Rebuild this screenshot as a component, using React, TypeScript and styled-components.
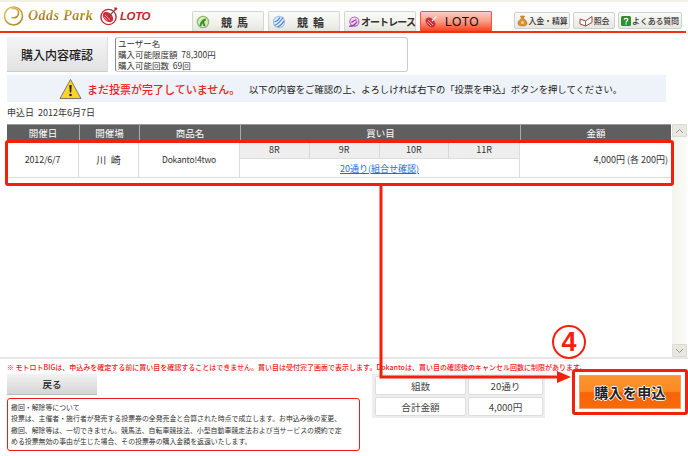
import React from "react";
import styled, { createGlobalStyle } from "styled-components";

const GlobalStyle = createGlobalStyle`
  html, body {
    margin: 0;
    padding: 0;
    background: #fff;
  }
  body {
    font-family: "Noto Sans CJK JP", "Liberation Sans", sans-serif;
    font-size: 9px;
    color: #222;
  }
`;

const Page = styled.div`
  position: relative;
  width: 688px;
  height: 456px;
  overflow: hidden;
  border-top: 2px solid #f3f1e4;
  box-sizing: border-box;
`;

const Header = styled.div`
  display: flex;
  align-items: flex-end;
  width: 686px;
  height: 31px;
  box-sizing: border-box;
  border-bottom: 2px solid #f03010;
  padding-left: 3px;
`;

const Logo = styled.div`
  display: flex;
  align-items: center;
  width: 189px;
  height: 29px;
  flex-shrink: 0;
  padding-bottom: 2px;
  box-sizing: border-box;
`;

const OddsText = styled.span`
  font-family: "Liberation Serif", serif;
  font-style: italic;
  font-weight: bold;
  font-size: 14px;
  letter-spacing: 0.45px;
  background: linear-gradient(#d8b850, #a88420 60%, #8a6a18);
  -webkit-background-clip: text;
  background-clip: text;
  color: transparent;
  margin-left: 4px;
  width: 72px;
  white-space: nowrap;
`;

const LotoText = styled.span`
  font-family: "Liberation Sans", sans-serif;
  font-style: italic;
  font-weight: bold;
  font-size: 11.5px;
  letter-spacing: -0.4px;
  color: #c8262c;
  margin-left: 1px;
`;

const Tabs = styled.div`
  display: flex;
  gap: 4px;
`;

const Tab = styled.div<{ $active?: boolean }>`
  display: flex;
  align-items: center;
  width: 72px;
  height: 20px;
  box-sizing: border-box;
  padding-left: 3px;
  gap: 1px;
  border: 1px solid ${({ $active }) => ($active ? "#f4552e" : "#d6d6d0")};
  border-bottom: none;
  border-radius: 2px 2px 0 0;
  background: ${({ $active }) =>
    $active
      ? "linear-gradient(#fbd0c4, #fa9a84 50%, #f6431e)"
      : "linear-gradient(#fafaf8, #f0f0ec 60%, #e4e4e0)"};
  color: #333;
`;

const TabLabel = styled.span<{ $wide?: boolean; $latin?: boolean }>`
  flex: 1;
  text-align: center;
  white-space: nowrap;
  letter-spacing: ${({ $wide, $latin }) =>
    $wide ? "5px" : $latin ? "0.4px" : "-0.9px"};
  font-family: ${({ $latin }) =>
    $latin ? '"Liberation Sans", sans-serif' : "inherit"};
  font-weight: ${({ $latin }) => ($latin ? "normal" : "bold")};
  font-size: ${({ $latin, $wide }) =>
    $latin ? "12px" : $wide ? "11px" : "10px"};
  color: ${({ $latin }) => ($latin ? "#111" : "#333")};
  padding-right: ${({ $latin }) => ($latin ? "6px" : "0")};
`;

const Utilities = styled.div`
  display: flex;
  gap: 3px;
  margin-left: 22px;
  margin-bottom: 2px;
`;

const UtilityButton = styled.div<{ $width: number }>`
  display: flex;
  align-items: center;
  justify-content: center;
  gap: 1px;
  width: ${({ $width }) => $width}px;
  height: 17px;
  box-sizing: border-box;
  border: 1px solid #d0d0cc;
  border-radius: 2px;
  background: linear-gradient(#fafaf8, #e6e6e2);
  font-size: 8px;
  font-weight: 500;
  color: #333;
  white-space: nowrap;
  letter-spacing: -0.2px;
`;

const TitleRow = styled.div`
  display: flex;
  gap: 7px;
  padding: 4px 0 0 7px;
`;

const TitleBox = styled.div`
  display: flex;
  align-items: center;
  justify-content: center;
  width: 101px;
  height: 35px;
  background: linear-gradient(#f4f4f4, #e2e2e2);
  border-right: 1px solid #ddd;
  border-bottom: 1px solid #ccc;
  box-sizing: border-box;
  font-size: 12px;
  font-weight: 500;
  color: #222;
`;

const UserBox = styled.div`
  width: 293px;
  height: 35px;
  box-sizing: border-box;
  padding: 0 2px;
  border: 1px solid #ccc;
  border-radius: 3px;
  border-left-color: #888;
  line-height: 11px;
  font-size: 8.5px;
  color: #333;
`;

const Banner = styled.div`
  display: flex;
  align-items: center;
  width: 659px;
  height: 27px;
  margin: 3px 0 0 7px;
  padding-left: 52px;
  box-sizing: border-box;
  background: #eef2f9;
`;

const BannerAlert = styled.span`
  margin-left: 5px;
  width: 162px;
  font-size: 11px;
  font-weight: 500;
  color: #f02020;
  white-space: nowrap;
`;

const BannerText = styled.span`
  font-size: 9.35px;
  color: #222;
  white-space: nowrap;
`;

const DateLine = styled.div`
  padding: 4px 0 0 7px;
  height: 18px;
  box-sizing: border-box;
  line-height: 13px;
  font-size: 9px;
  color: #333;
`;

const ScrollArea = styled.div`
  display: flex;
  width: 688px;
  height: 235px;
  border-bottom: 2px solid #e6e6e4;
  box-sizing: border-box;
  padding-left: 7px;
  margin-top: 4px;
`;

const ContentTable = styled.div`
  width: 664px;
  flex-shrink: 0;
`;

const HeadRow = styled.div`
  display: grid;
  grid-template-columns: 72px 60px 101px 280px 1fr;
  height: 17px;
  background: #5f5f5f;
  border-top: 1px solid #999;
  box-sizing: border-box;
`;

const HeadCell = styled.div`
  display: flex;
  align-items: center;
  justify-content: center;
  border-left: 1px solid #aaa;
  color: #fff;
  font-size: 9.5px;
  &:first-child {
    border-left: none;
  }
`;

const BodyRow = styled.div`
  display: grid;
  grid-template-columns: 72px 60px 101px 280px 1fr;
  height: 37px;
  border-bottom: 1px solid #ddd;
  box-sizing: border-box;
`;

const BodyCell = styled.div<{ $right?: boolean; $size?: number; $tight?: number }>`
  display: flex;
  align-items: center;
  justify-content: ${({ $right }) => ($right ? "flex-end" : "center")};
  padding-right: ${({ $right }) => ($right ? "3px" : "0")};
  border-right: 1px solid #ddd;
  font-size: ${({ $size }) => $size ?? 9}px;
  letter-spacing: ${({ $tight }) => $tight ?? 0}px;
  color: #333;
  &:last-child {
    border-right: none;
  }
`;

const BetsCell = styled.div`
  display: flex;
  flex-direction: column;
  border-right: 1px solid #ddd;
`;

const RaceRow = styled.div`
  display: grid;
  grid-template-columns: repeat(4, 1fr);
  height: 18px;
  background: #eeeeee;
  border-bottom: 1px solid #ddd;
  box-sizing: border-box;
`;

const RaceCell = styled.div`
  display: flex;
  align-items: center;
  justify-content: center;
  border-right: 1px solid #d8d8d8;
  font-size: 9px;
  color: #333;
  &:last-child {
    border-right: none;
  }
`;

const ComboLink = styled.a`
  flex: 1;
  display: flex;
  align-items: center;
  justify-content: center;
  color: #1a6fd8;
  font-size: 9px;
  text-decoration: underline;
`;

const ScrollBar = styled.div`
  display: flex;
  flex-direction: column;
  justify-content: space-between;
  width: 15px;
  margin-left: 1px;
  background: linear-gradient(90deg, #f4f4ee, #fbfbf8);
  box-sizing: border-box;
`;

const ScrollButton = styled.div`
  display: flex;
  align-items: center;
  justify-content: center;
  height: 11px;
  background: #e8e8e0;
  border: 1px solid #dcdcd4;
  border-radius: 1px;
  color: #9a9a90;
`;

const NoteLine = styled.div`
  padding: 3px 0 0 7px;
  height: 15px;
  box-sizing: border-box;
  line-height: 10px;
  color: #f01818;
  font-size: 7px;
  font-weight: 500;
  white-space: nowrap;
`;

const BottomArea = styled.div`
  display: flex;
  padding-left: 7px;
`;

const LeftColumn = styled.div`
  display: flex;
  flex-direction: column;
  gap: 3px;
  width: 353px;
  flex-shrink: 0;
`;

const BackButton = styled.div`
  display: flex;
  align-items: center;
  justify-content: center;
  width: 90px;
  height: 21px;
  background: linear-gradient(#f2f2f2, #d4d4d4);
  border-bottom: 1px solid #bbb;
  box-sizing: border-box;
  font-size: 9.5px;
  font-weight: 500;
  color: #222;
`;

const TermsBox = styled.div`
  height: 53px;
  box-sizing: border-box;
  padding: 3px 0 0 3px;
  border: 1px solid #f01818;
  border-radius: 3px;
  font-size: 6.9px;
  line-height: 11.4px;
  color: #333;
  white-space: nowrap;
`;

const Summary = styled.div`
  display: grid;
  grid-template-columns: 91px 75px;
  grid-auto-rows: 19px;
  gap: 2px;
  width: 173px;
  height: 44px;
  box-sizing: border-box;
  margin-left: 12px;
  padding: 2px 3px;
  background: #eeeeee;
`;

const SummaryCell = styled.div`
  display: flex;
  align-items: center;
  justify-content: center;
  background: #fff;
  border: 1px solid #ddd;
  border-radius: 2px;
  font-size: 9.6px;
  color: #444;
`;

/* red guide marks drawn over the page */
const Highlight = styled.div`
  position: absolute;
  left: 5px;
  top: 138px;
  width: 669px;
  height: 46px;
  box-sizing: border-box;
  border: 3px solid #f5200c;
  border-radius: 3px;
`;

const Guide = styled.svg`
  position: absolute;
  left: 0;
  top: 0;
  pointer-events: none;
`;

const StepBadge = styled.div`
  position: absolute;
  left: 552px;
  top: 323px;
  width: 34px;
  height: 34px;
  box-sizing: border-box;
  display: flex;
  align-items: center;
  justify-content: center;
  border: 2px solid #f5200c;
  border-radius: 50%;
  background: #fff;
  color: #f5200c;
  font-family: "Liberation Sans", sans-serif;
  font-size: 27px;
  font-weight: bold;
`;

const BuyFrame = styled.div`
  position: absolute;
  left: 572px;
  top: 367px;
  width: 116px;
  height: 46px;
  box-sizing: border-box;
  padding: 3px 4px;
  border: 3px solid #f5200c;
  border-radius: 3px;
  background: #fff;
`;

const BuyButton = styled.div`
  display: flex;
  align-items: center;
  justify-content: center;
  height: 100%;
  background: linear-gradient(#fb9430, #fb8a24 48%, #f86408 52%, #f86a08);
  border: 1px solid #e8a070;
  box-sizing: border-box;
  color: #222;
  font-size: 14px;
  font-weight: bold;
  letter-spacing: 0.3px;
  text-shadow: -1px 0 #fff, 1px 0 #fff, 0 -1px #fff, 0 1px #fff;
`;

const HorseIcon = () => (
  <svg width="14" height="14" viewBox="0 0 14 14">
    <circle cx="7" cy="7" r="5.6" fill="#d8ecc0" stroke="#8cc06a" strokeWidth="1.4" />
    <path d="M3.500 11C4 7 6 4 10 3.500L9.500 6 8 6.500 9.500 11 7.500 11 6 8 5.500 11Z" fill="#3f8a2c" />
  </svg>
);

const BikeIcon = () => (
  <svg width="14" height="14" viewBox="0 0 14 14">
    <circle cx="7" cy="7" r="5.6" fill="#e4eefa" stroke="#a8c4ea" strokeWidth="1.200" />
    <path d="M2.500 10.500C5 9.500 9 5.500 11 2.500M2.500 7C5 6 7 4.500 8 2.500M5.500 12C8 11 10.500 9 12 6" stroke="#4f86cf" strokeWidth="1.300" fill="none" />
  </svg>
);

const HelmetIcon = () => (
  <svg width="14" height="14" viewBox="0 0 14 14">
    <circle cx="7.500" cy="6.500" r="5.400" fill="#f3d8f3" stroke="#b45ac4" strokeWidth="1.300" />
    <path d="M1.500 12C4.500 12 8.500 10 10.500 6.500M4 7.500C6 6 8 4.500 10 4.500" stroke="#a02fb0" strokeWidth="1.500" fill="none" />
  </svg>
);

const TargetIcon = () => (
  <svg width="14" height="14" viewBox="0 0 14 14">
    <ellipse cx="6.500" cy="7.500" rx="5.800" ry="4" fill="#c8323a" transform="rotate(45 6.500 7.500)" />
    <path d="M4 5l5 5M3 7l4 4" stroke="#f5b0a8" strokeWidth="0.900" />
    <path d="M8 6l4.500-4.500" stroke="#f8f0f0" strokeWidth="1.200" />
  </svg>
);

const LogoMark = () => (
  <svg width="21" height="22" viewBox="0 0 21 22">
    <defs>
      <linearGradient id="goldMark" x1="0" y1="0" x2="1" y2="1">
        <stop offset="0" stopColor="#e2c458" />
        <stop offset="1" stopColor="#a8801c" />
      </linearGradient>
    </defs>
    <circle cx="10.500" cy="11" r="9" fill="none" stroke="url(#goldMark)" strokeWidth="1.500" />
    <path d="M8.500 2v18" stroke="url(#goldMark)" strokeWidth="1.500" />
    <path d="M8.500 3.500h2.500a4.600 4.600 0 0 1 0 9.200H8.500" fill="none" stroke="url(#goldMark)" strokeWidth="1.500" />
  </svg>
);

const LotoMark = () => (
  <svg width="19" height="20" viewBox="0 0 19 20">
    <circle cx="8.500" cy="11" r="7.600" fill="#fff" stroke="#c8262c" strokeWidth="1.400" />
    <ellipse cx="8" cy="11" rx="6" ry="4.200" fill="#d0303a" transform="rotate(45 8 11)" />
    <path d="M5 9l5 5M4 11l3.500 3.500" stroke="#f4b4b0" strokeWidth="0.800" />
    <path d="M8.500 10.500L16 3" stroke="#555" strokeWidth="1.100" />
    <path d="M14 1.500h2.500l1 1-1 1.500-1.500.5Z" fill="#c8262c" />
  </svg>
);

const WarnIcon = () => (
  <svg width="23" height="22" viewBox="0 0 23 22">
    <path d="M11.500 1.500L22 20.500H1Z" fill="#fbd42a" stroke="#5a5a70" strokeWidth="0.800" strokeLinejoin="round" />
    <path d="M10.300 7h2.400l-.5 7.500h-1.400Z" fill="#222" />
    <circle cx="11.500" cy="17" r="1.300" fill="#222" />
  </svg>
);

const BagIcon = () => (
  <svg width="11" height="12" viewBox="0 0 11 12">
    <path d="M3.500 1h4L6.500 3.500c2 1 3.500 3 3.500 5 0 1.800-2 2.500-4.500 2.500S1 10.300 1 8.500c0-2 1.500-4 3.500-5Z" fill="#d89030" stroke="#a86818" strokeWidth="0.500" />
    <circle cx="5.500" cy="7.500" r="1.500" fill="#f5d890" />
  </svg>
);

const BookIcon = () => (
  <svg width="14" height="12" viewBox="0 0 14 12">
    <path d="M1 4l5.500 2L13 1.500v6L6.500 11 1 9Z" fill="#fff" stroke="#a04040" strokeWidth="1" />
    <path d="M6.500 6v5" stroke="#4a70a0" />
  </svg>
);

const HelpIcon = () => (
  <svg width="10" height="10" viewBox="0 0 10 10">
    <rect width="10" height="10" rx="1.500" fill="#2f8f2f" />
    <path d="M3.200 3.800C3.400 1.900 6.800 2 6.800 3.800 6.800 5 5 5 5 6.500" fill="none" stroke="#fff" strokeWidth="1.300" />
    <rect x="4.400" y="7.300" width="1.300" height="1.300" fill="#fff" />
  </svg>
);

const App: React.FC = () => (
  <Page>
    <GlobalStyle />
    <Header>
      <Logo>
        <LogoMark />
        <OddsText>Odds Park</OddsText>
        <LotoMark />
        <LotoText>LOTO</LotoText>
      </Logo>
      <Tabs>
        <Tab>
          <HorseIcon />
          <TabLabel $wide>競馬</TabLabel>
        </Tab>
        <Tab>
          <BikeIcon />
          <TabLabel $wide>競輪</TabLabel>
        </Tab>
        <Tab>
          <HelmetIcon />
          <TabLabel>オートレース</TabLabel>
        </Tab>
        <Tab $active>
          <TargetIcon />
          <TabLabel $latin>LOTO</TabLabel>
        </Tab>
      </Tabs>
      <Utilities>
        <UtilityButton $width={56}>
          <BagIcon />
          入金・精算
        </UtilityButton>
        <UtilityButton $width={42}>
          <BookIcon />
          照会
        </UtilityButton>
        <UtilityButton $width={64}>
          <HelpIcon />
          よくある質問
        </UtilityButton>
      </Utilities>
    </Header>
    <TitleRow>
      <TitleBox>購入内容確認</TitleBox>
      <UserBox>
        ユーザー名
        <br />
        購入可能限度額&nbsp;&nbsp;78,300円
        <br />
        購入可能回数&nbsp;&nbsp;69回
      </UserBox>
    </TitleRow>
    <Banner>
      <WarnIcon />
      <BannerAlert>まだ投票が完了していません。</BannerAlert>
      <BannerText>以下の内容をご確認の上、よろしければ右下の「投票を申込」ボタンを押してください。</BannerText>
    </Banner>
    <DateLine>申込日&nbsp;&nbsp;2012年6月7日</DateLine>
    <ScrollArea>
      <ContentTable>
        <HeadRow>
          <HeadCell>開催日</HeadCell>
          <HeadCell>開催場</HeadCell>
          <HeadCell>商品名</HeadCell>
          <HeadCell>買い目</HeadCell>
          <HeadCell>金額</HeadCell>
        </HeadRow>
        <BodyRow>
          <BodyCell $tight={-0.2}>2012/6/7</BodyCell>
          <BodyCell $size={10}>川&nbsp;&nbsp;崎</BodyCell>
          <BodyCell $size={8.5} $tight={-0.2}>Dokanto!4two</BodyCell>
          <BetsCell>
            <RaceRow>
              <RaceCell>8R</RaceCell>
              <RaceCell>9R</RaceCell>
              <RaceCell>10R</RaceCell>
              <RaceCell>11R</RaceCell>
            </RaceRow>
            <ComboLink>20通り(組合せ確認)</ComboLink>
          </BetsCell>
          <BodyCell $right>4,000円 (各 200円)</BodyCell>
        </BodyRow>
      </ContentTable>
      <ScrollBar>
        <ScrollButton>
          <svg width="9" height="6" viewBox="0 0 9 6">
            <path d="M1 5l3.500-3.500L8 5" fill="none" stroke="currentColor" />
          </svg>
        </ScrollButton>
        <ScrollButton>
          <svg width="9" height="6" viewBox="0 0 9 6">
            <path d="M1 1l3.500 3.500L8 1" fill="none" stroke="currentColor" />
          </svg>
        </ScrollButton>
      </ScrollBar>
    </ScrollArea>
    <NoteLine>
      ※ モトロトBIGは、申込みを確定する前に買い目を確認することはできません。買い目は受付完了画面で表示します。Dokantoは、買い目の確認後のキャンセル回数に制限があります。
    </NoteLine>
    <BottomArea>
      <LeftColumn>
        <BackButton>戻る</BackButton>
        <TermsBox>
          撤回・解除等について
          <br />
          投票は、主催者・施行者が発売する投票券の全発売金と合算された時点で成立します。お申込み後の変更、
          <br />
          撤回、解除等は、一切できません。競馬法、自転車競技法、小型自動車競走法および当サービスの規約で定
          <br />
          める投票無効の事由が生じた場合、その投票券の購入金額を返還いたします。
        </TermsBox>
      </LeftColumn>
      <Summary>
        <SummaryCell>組数</SummaryCell>
        <SummaryCell>20通り</SummaryCell>
        <SummaryCell>合計金額</SummaryCell>
        <SummaryCell>4,000円</SummaryCell>
      </Summary>
    </BottomArea>
    <Highlight />
    <Guide width="688" height="456">
      <path d="M381 184V375H558" fill="none" stroke="#f5200c" strokeWidth="3" />
      <path d="M557 369L571 375L557 381Z" fill="#f5200c" />
    </Guide>
    <StepBadge>4</StepBadge>
    <BuyFrame>
      <BuyButton>購入を申込</BuyButton>
    </BuyFrame>
  </Page>
);

export default App;
